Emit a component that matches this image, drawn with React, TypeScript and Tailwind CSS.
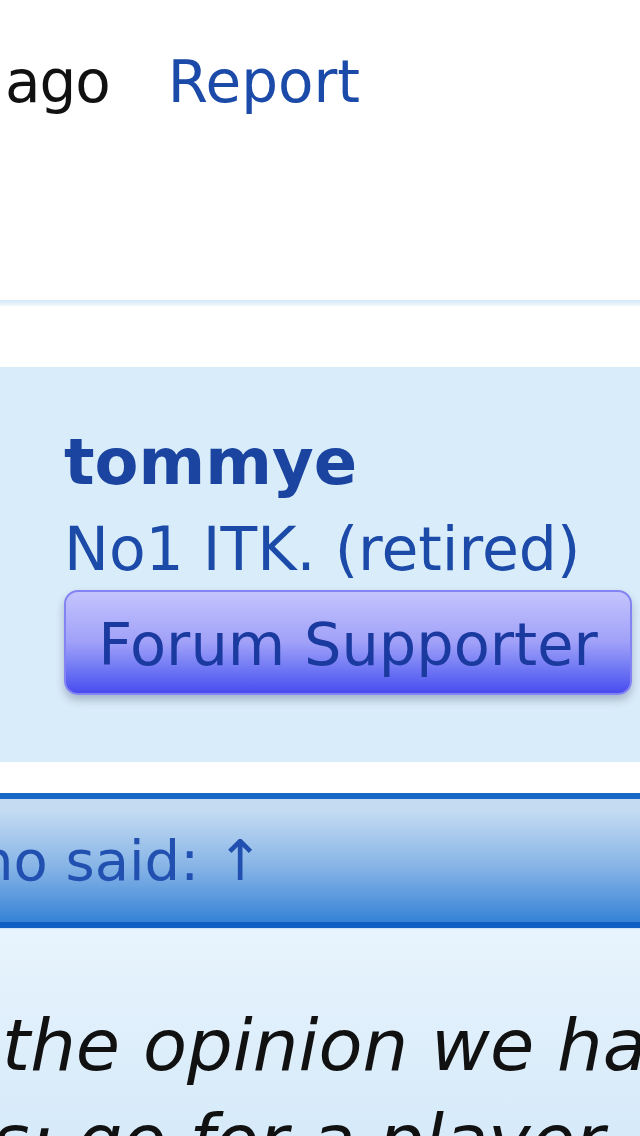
export default function App() {
  return (
    <div className="w-[640px] h-[1136px] overflow-hidden bg-white font-['DejaVu_Sans',sans-serif]">
      {/* Post meta row */}
      <div className="h-[300px] pt-[46px] pl-[5px] flex items-start text-[58px] leading-[72px] whitespace-nowrap">
        <span className="text-[#111] tracking-[-1px]">ago</span>
        <a className="ml-[58px] text-[#1b4aa8]">Report</a>
      </div>
      <div className="h-[6px] bg-gradient-to-b from-[#d3e9f8] to-[#f2f8fd]" />
      <div className="h-[61px]" />

      {/* User info panel */}
      <div className="h-[395px] bg-[#d9ecf9] pl-[64px] pt-[53px] whitespace-nowrap">
        <div className="text-[64px] leading-[85px] font-bold text-[#1a449f]">tommye</div>
        <div className="mt-[2px] text-[60px] leading-[85px] text-[#1c4aa8]">No1 ITK. (retired)</div>
        <div className="-mt-[2px] w-[568px] h-[105px] rounded-[14px] border-2 border-[#8383f4] bg-gradient-to-b from-[#c4c4fd] via-[#a0a0f8] to-[#4a4aee] pt-[4px] text-center text-[59px] leading-[97px] text-[#1a3aa0] shadow-[0_5px_9px_rgba(40,60,90,0.3)]">
          Forum Supporter
        </div>
      </div>

      <div className="h-[31px]" />

      {/* Quote header */}
      <div className="border-t-[6px] border-t-[#1767c6] border-b-[6px] border-b-[#0f5fc4] bg-gradient-to-b from-[#c4dbf2] from-[10%] via-[#86b4e6] via-[55%] to-[#3482d6] h-[135px] pt-[4px] overflow-hidden whitespace-nowrap">
        <div className="-ml-[22px] text-[56px] leading-[116px] text-[#2150b0]">
          ho said: ↑
        </div>
      </div>

      {/* Quote body */}
      <div className="h-[208px] border-t border-t-[#cfe4f8] bg-gradient-to-b from-[#e8f4fd] to-[#d6eaf9] pt-[69px] overflow-hidden whitespace-nowrap italic text-[72px] leading-[95px] text-[#111]">
        <div className="pl-[2px]">the opinion we have</div>
        <div className="-ml-[8px]">s; go for a player</div>
      </div>
    </div>
  );
}
